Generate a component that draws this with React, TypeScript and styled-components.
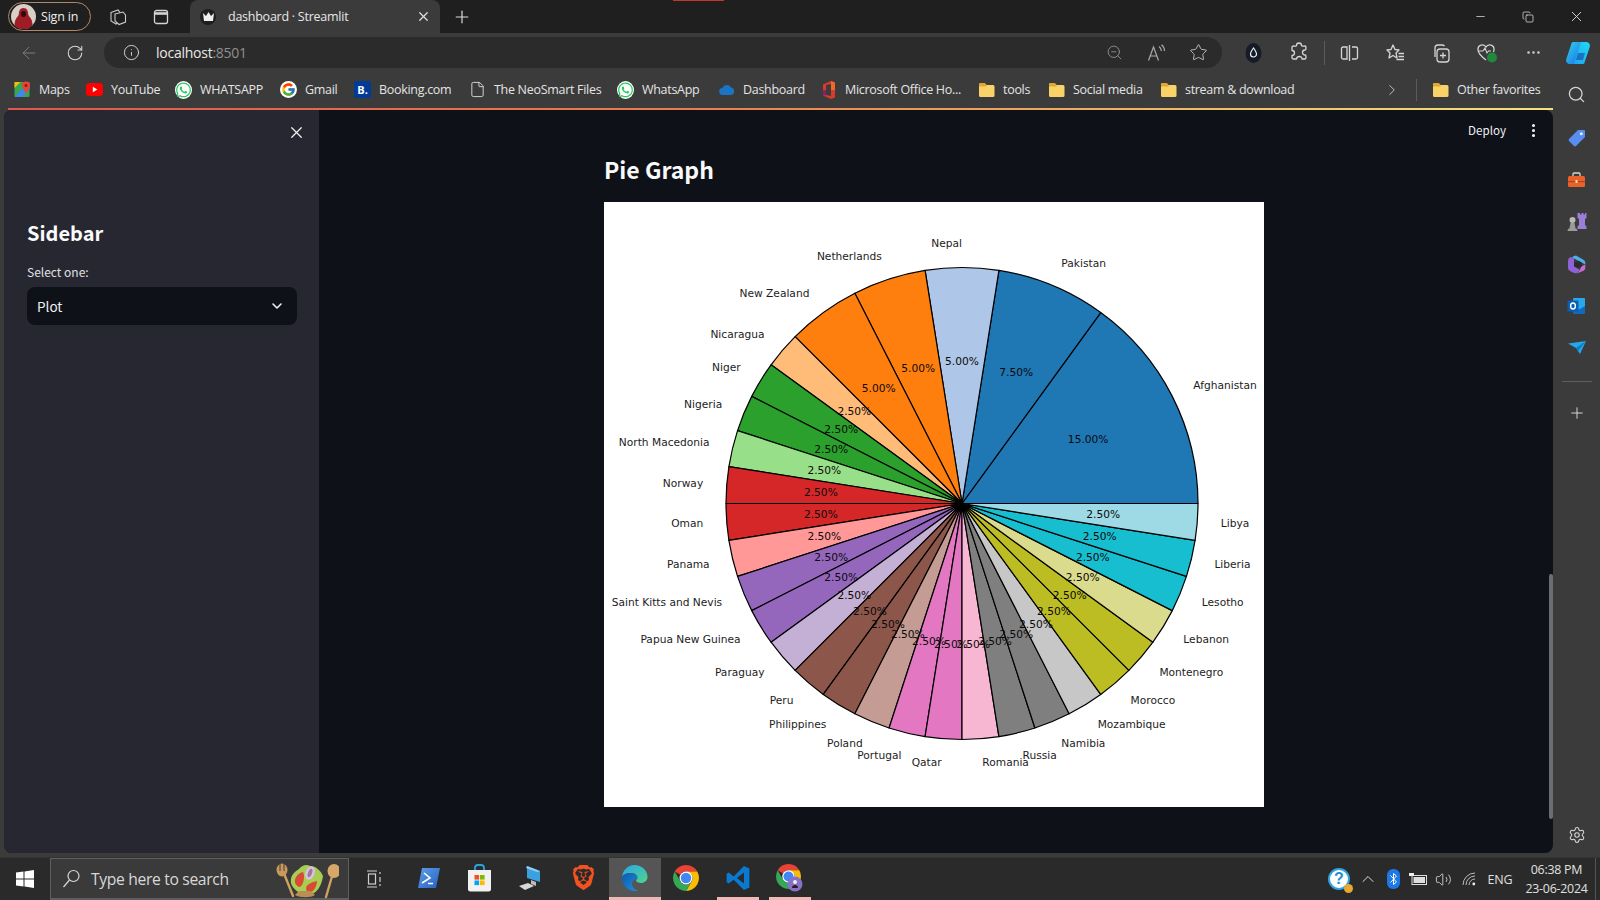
import React from "react";
import styled, { createGlobalStyle } from "styled-components";
import {
  ArrowLeft, RotateCw, Info, X, Plus, Minus, Copy, ChevronRight, ChevronDown, ChevronUp,
  Settings, EllipsisVertical, Ellipsis, Volume2, Search, ZoomOut, Star, File,
} from "lucide-react";
import { IoLogoWhatsapp } from "react-icons/io5";
import { FcGoogle } from "react-icons/fc";
import { SiBrave } from "react-icons/si";

const UI = `"Open Sans", "Noto Sans", "Liberation Sans", sans-serif`;
const ST = `"Noto Sans CJK SC", "Noto Sans", "Open Sans", sans-serif`;

const Global = createGlobalStyle`
  html, body { margin: 0; padding: 0; background: #3b3b3b; overflow: hidden; }
  * { box-sizing: border-box; }
`;

const Page = styled.div`
  width: 1600px; height: 900px; display: flex; flex-direction: column; font-family: ${UI}; color: #e6e6e6; position: relative;
`;
const TitleBar = styled.div`
  height: 33px; background: #1f1f1f; display: flex; align-items: stretch; padding-left: 8px; position: relative;
`;
const RecordMark = styled.div`
  position: absolute; left: 673px; top: 0; width: 51px; height: 1px; background: #c0392b;
`;
const SignIn = styled.div`
  width: 83px; height: 29px; margin-top: 2px; border: 1px solid #b08a68; border-radius: 15px; display: flex; align-items: center;
  padding-left: 2px; gap: 5px; font-size: 12.5px; color: #eee; letter-spacing: -0.2px;
`;
const Slot = styled.div<{ $w: number }>`
  width: ${(p) => p.$w}px; flex: none; display: flex; align-items: center; justify-content: center; color: #dedede;
`;
const SlotGap = styled.div<{ $w: number }>`
  width: ${(p) => p.$w}px; flex: none;
`;
const Tab = styled.div`
  width: 250px; margin-left: 8px; background: #3b3b3b; border-radius: 8px 8px 0 0; display: flex; align-items: center; padding-left: 10px; gap: 12px;
  font-size: 12.5px; letter-spacing: -0.25px; color: #e8e8e8;
`;
const TabTitle = styled.span` flex: 1; `;
const Favicon = styled.div`
  width: 16px; height: 16px; border-radius: 50%; background: #1d1d22; display: flex; align-items: center; justify-content: center;
`;
const Spacer = styled.div` flex: 1; `;

const ToolBar = styled.div`
  height: 38px; background: #3b3b3b; display: flex; align-items: stretch; padding: 4px 0 3px 6px;
`;
const AddressBar = styled.div`
  width: 1120px; margin: 0 8px 0 6px; background: #2b2b2b; border-radius: 16px; display: flex; align-items: center; padding: 0 3px 0 17px; font-size: 14px; letter-spacing: -0.25px;
`;
const Host = styled.span` color: #e8e8e8; margin-left: 15px; `;
const Port = styled.span` color: #8f8f8f; `;
const Divider = styled.div<{ $h: number; $ml: number; $mr: number }>`
  width: 1px; height: ${(p) => p.$h}px; background: #5c5c5c; align-self: center; flex: none; margin: 0 ${(p) => p.$mr}px 0 ${(p) => p.$ml}px;
`;

const BookmarksBar = styled.div`
  height: 37px; background: #3b3b3b; display: flex; align-items: center; padding-left: 14px;
`;
const Bookmark = styled.div<{ $w: number }>`
  width: ${(p) => p.$w}px; flex: none; display: flex; align-items: center; gap: 8px; font-size: 12.5px; letter-spacing: -0.3px; color: #e4e4e4; white-space: nowrap;
`;
const BmIcon = styled.div`
  width: 17px; height: 17px; flex: none; display: flex; align-items: center; justify-content: center;
`;
const BookingBadge = styled.div`
  width: 17px; height: 17px; background: #003b95; border-radius: 2px; color: #fff; font-size: 11px; font-weight: 700; text-align: center; line-height: 17px; letter-spacing: 0;
`;

const Workspace = styled.div`
  flex: 1; min-height: 0; display: flex; background: #3b3b3b; padding-left: 4px;
`;
const WindowColumn = styled.div`
  width: 1549px; display: flex; flex-direction: column; padding-bottom: 4px;
`;
const AccentLine = styled.div`
  height: 2px; margin-left: 4px; flex: none; background: linear-gradient(90deg, #e0574c 0%, #e8804f 45%, #efb866 75%, #f3e27c 100%);
`;
const StWindow = styled.div`
  flex: 1; min-height: 0; display: flex; border-radius: 8px; overflow: hidden; position: relative; background: #0e1117;
`;
const Sidebar = styled.aside`
  width: 315px; flex: none; background: #262730; padding: 0 22px 0 23px; display: flex; flex-direction: column; font-family: ${ST};
`;
const CloseRow = styled.div`
  height: 34px; display: flex; justify-content: flex-end; align-items: flex-end; color: #f0f0f0; margin-right: -9px; padding-bottom: 2px;
`;
const SideTitle = styled.h2`
  margin: 73px 0 0; height: 32px; font-size: 20px; line-height: 32px; font-weight: 700; color: #fafafa;
`;
const SelectLabel = styled.div`
  margin-top: 13px; height: 20px; font-size: 12px; line-height: 20px; color: #e0e0e4;
`;
const SelectBox = styled.div`
  margin-top: 5px; height: 38px; border-radius: 8px; background: #0e1117; display: flex; align-items: center; justify-content: space-between;
  padding: 0 12px 0 10px; font-size: 13.5px; color: #f0f0f2;
`;
const Main = styled.main`
  flex: 1; min-width: 0; padding: 0 0 0 285px; font-family: ${ST}; position: relative;
`;
const TopActions = styled.div`
  position: absolute; right: 11px; top: 9px; height: 22px; display: flex; align-items: center; gap: 19px; font-size: 11.6px; color: #f0f0f2;
`;
const MainTitle = styled.h1`
  margin: 40px 0 0; height: 41px; font-size: 23px; line-height: 38px; font-weight: 700; color: #fafafa;
`;
const Figure = styled.div`
  margin-top: 11px; width: 660px; height: 605px; background: #fff;
`;
const Scrollbar = styled.div`
  position: absolute; right: 0; top: 464px; width: 4px; height: 245px; background: #6a6d75; border-radius: 2px;
`;
const ChartName = styled.text`
  font-family: "DejaVu Sans", sans-serif; font-size: 10.65px; fill: #1c1c1c;
`;
const ChartPct = styled.text`
  font-family: "DejaVu Sans", sans-serif; font-size: 10.65px; fill: #0a0a0a;
`;

const Rail = styled.div`
  flex: 1; display: flex; flex-direction: column; align-items: center; padding: 9px 0 1px; color: #d8d8d8; position: relative;
`;
const RailSearch = styled.div`
  position: absolute; top: -23px; left: 14px; color: #d5d5d5;
`;
const RailSlot = styled.div`
  height: 42px; width: 100%; display: flex; align-items: center; justify-content: center;
`;
const RailRule = styled.div`
  width: 30px; height: 1px; background: #5f5f5f; margin: 12px 0 10px;
`;

const Taskbar = styled.div`
  height: 43px; flex: none; background: #2a2a2a; border-top: 1px solid #333; display: flex; align-items: stretch; color: #ddd;
`;
const SearchBox = styled.div`
  width: 299px; flex: none; background: #3a3a3a; border: 1px solid #5e5e5e; border-bottom-width: 2px; display: flex; align-items: center; padding: 0 9px 0 11px; gap: 10px; font-size: 15.7px; color: #d8d8d8; letter-spacing: -0.35px;
`;
const TaskSlot = styled.div<{ $active?: boolean }>`
  width: 51.7px; flex: none; display: flex; flex-direction: column; align-items: center; background: ${(p) => (p.$active ? "#555" : "transparent")};
`;
const TaskIcon = styled.div`
  flex: 1; display: flex; align-items: center; justify-content: center;
`;
const RunningBar = styled.div<{ $wide?: boolean; $on?: boolean }>`
  height: 3px; flex: none; width: ${(p) => (p.$wide ? "100%" : "42px")}; background: ${(p) => (p.$on ? "#f0b9b6" : "transparent")};
`;
const TrayText = styled.div`
  font-size: 12.5px; color: #e0e0e0; letter-spacing: -0.2px;
`;
const Clock = styled.div`
  width: 78px; flex: none; display: flex; flex-direction: column; align-items: center; justify-content: center; gap: 4px; font-size: 12.4px; line-height: 15px; color: #e0e0e0; letter-spacing: -0.25px; border-right: 1px solid #555; margin-right: 4px; white-space: nowrap;
`;
const TaskSpacer = styled.div<{ $w: number }>`
  width: ${(p) => p.$w}px; flex: none;
`;
const HelpBadge = styled.div`
  width: 22px; height: 22px; border-radius: 50%; background: #fff; border: 2.5px solid #2fa3e0; color: #1f8fd0; font-family: "Liberation Sans", sans-serif; font-weight: 700; font-size: 16px; line-height: 17px; text-align: center; position: relative;
  &::after { content: ""; position: absolute; right: -5px; bottom: -5px; width: 9px; height: 9px; border-radius: 50%; background: #e9a92f; }
`;

/* ---------- drawings ---------- */
const Avatar = () => (
  <svg width="25" height="25" viewBox="0 0 25 25">
    <circle cx="12.5" cy="12.5" r="12.5" fill="#d9cfc9" />
    <path d="M12.5 4c3.4 0 4.6 3 4.6 5.6 0 1.6 1 2.6 2.4 4.4 1.6 2 2 5.6 2 7.4a12.5 12.5 0 0 1-18 0c0-1.8.4-5.4 2-7.4 1.4-1.8 2.4-2.8 2.4-4.4C7.9 7 9.1 4 12.5 4z" fill="#9e1c26" />
    <ellipse cx="12.5" cy="10" rx="2.6" ry="3" fill="#2a0d10" />
  </svg>
);
const Workspaces = () => (
  <svg width="18" height="18" viewBox="0 0 18 18" fill="none" stroke="#c9c9c9" strokeWidth="1.1">
    <path d="M2 4.5 9 2l2 2.5v9L7 16l-5-3z" />
    <path d="M6 6l8-2 2.5 3v7L10 16.5 6 13z" fill="#1f1f1f" />
  </svg>
);
const TabsIcon = () => (
  <svg width="16" height="16" viewBox="0 0 16 16" fill="none" stroke="#d4d4d4" strokeWidth="1.3">
    <rect x="1.5" y="1.5" width="13" height="13" rx="2" />
    <path d="M1.5 4.5h13" strokeWidth="2.6" />
  </svg>
);
const Crown = () => (
  <svg width="11" height="9" viewBox="0 0 11 9"><path d="M0 1l3 3L5.5 0 8 4l3-3-1 8H1z" fill="#eee" /></svg>
);
const MapsIcon = () => (
  <svg width="17" height="17" viewBox="0 0 17 17">
    <rect x="0.5" y="1" width="15" height="15" rx="1.5" fill="#34a853" />
    <path d="M.5 16 15.5 1v7L8 16z" fill="#4285f4" />
    <path d="M.5 1h6L.5 7z" fill="#fbbc04" />
    <circle cx="12" cy="4.5" r="4" fill="#ea4335" /><circle cx="12" cy="4.5" r="1.5" fill="#8c1c13" />
    <path d="M9 7l3 6 3-6z" fill="#ea4335" />
  </svg>
);
const YouTube = () => (
  <svg width="17" height="13" viewBox="0 0 17 13"><rect width="17" height="13" rx="3.5" fill="#f00" /><path d="M6.8 3.8v5.400l4.600-2.700z" fill="#fff" /></svg>
);
const Whats = () => <IoLogoWhatsapp size={18} color="#27c95f" style={{ background: "#fff", borderRadius: "50%" }} />;
const Google = () => <FcGoogle size={17} style={{ background: "#fff", borderRadius: "50%", padding: 1 }} />;
const CloudIcon = () => (
  <svg width="16" height="11" viewBox="0 0 16 11"><path d="M4 11a3.5 3.5 0 0 1-.6-7A4.8 4.8 0 0 1 12 3.5 3.8 3.8 0 0 1 12 11z" fill="#1b74c4" /></svg>
);
const OfficeIcon = () => (
  <svg width="14" height="18" viewBox="0 0 14 18">
    <path d="M1 3.5 9 0l4 1.500v15L9 18l-8-3.500z" fill="#d83b2b" />
    <path d="M9 3v12L4 14V4z" fill="#3b3b3b" />
    <path d="M9 0l4 1.500V9H9z" fill="#f2672a" /><path d="M1 9h3v5.500l-3 0z" fill="#8a1f6a" />
  </svg>
);
const FolderIcon = () => (
  <svg width="17" height="15" viewBox="0 0 17 15">
    <path d="M1 2.5A1.5 1.5 0 0 1 2.5 1h4L8.5 3H15a1.5 1.5 0 0 1 1.5 1.5v9A1.5 1.5 0 0 1 15 15H2.5A1.5 1.5 0 0 1 1 13.5z" fill="#f9d36a" />
    <path d="M1 2.5A1.5 1.5 0 0 1 2.5 1h4L8.500 3v1.500H1z" fill="#e0a92e" />
  </svg>
);
const InkDrop = () => (
  <svg width="19" height="22" viewBox="0 0 19 22">
    <ellipse cx="9.5" cy="11" rx="8" ry="10" fill="#151c26" />
    <path d="M9.5 6c2 2.800 3 4.200 3 6a3 3 0 0 1-6 0c0-1.800 1-3.200 3-6z" fill="none" stroke="#eef" strokeWidth="1.2" />
  </svg>
);
const ReadAloud = () => (
  <svg width="19" height="18" viewBox="0 0 19 18" fill="none" stroke="#a9a9a9" strokeWidth="1.2">
    <path d="M1.5 16.5 6.5 3l5 13.500M3.3 12h6.500" />
    <path d="M12 2.5c1.500 1 2.300 2.600 2.300 4.500M14.500.8c2 1.500 3 3.600 3 6.200" />
  </svg>
);
const ExtensionPiece = () => (
  <svg width="20" height="21" viewBox="0 0 20 21" fill="none" stroke="#d6d6d6" strokeWidth="1.3" strokeLinejoin="round">
    <path d="M7.5 3.500a2.500 2.500 0 0 1 5 0c0 .8 2 .5 3.500.5 1 0 1 1 1 2.500 0 1.500-1 1.500-1 1.500a2.500 2.500 0 0 0 0 5s1 0 1 1.500c0 1.500 0 2.500-1 2.500h-3s.2-2.500-2.500-2.500S7.500 17 7.500 17h-3c-1 0-1.500-.5-1.500-1.500v-2c1.500 0 2.500-1 2.500-2.500S4.500 8.500 3 8.500v-3C3 4.500 3.500 4 4.500 4c1.500 0 3 .3 3-.5z" />
  </svg>
);
const SplitScreen = () => (
  <svg width="19" height="18" viewBox="0 0 19 18" fill="none" stroke="#d6d6d6" strokeWidth="1.3">
    <path d="M7 3H3a1.500 1.500 0 0 0-1.500 1.500v9A1.500 1.500 0 0 0 3 15h4zM12 3h4a1.500 1.500 0 0 1 1.500 1.500v9A1.500 1.500 0 0 1 16 15h-4" />
    <path d="M9.500 1v16" />
  </svg>
);
const Collections = () => (
  <svg width="20" height="22" viewBox="0 0 20 22" fill="none" stroke="#d6d6d6" strokeWidth="1.3">
    <rect x="6" y="7" width="12" height="13" rx="3" />
    <path d="M12 10.500v6M9 13.500h6" />
    <path d="M4 15V6a3 3 0 0 1 3-3h4a3 3 0 0 1 2.500 1.200" />
  </svg>
);
const FavList = () => (
  <svg width="20" height="20" viewBox="0 0 20 20" fill="none" stroke="#d6d6d6" strokeWidth="1.3">
    <path d="M8 2l2 4.500 4 .5-3 3 1 5-4-2.500L4 15l1-5-3-3 4-.5z" strokeLinejoin="round" />
    <path d="M13.500 10.500H19M13.500 13.500H19M11.500 16.500H19" />
  </svg>
);
const HealthHeart = () => (
  <svg width="22" height="22" viewBox="0 0 22 22" fill="none">
    <path d="M10 18C4 13.500 2 11 2 7.500A4.300 4.300 0 0 1 10 5a4.300 4.300 0 0 1 8 2.500c0 1-.2 1.800-.6 2.500" stroke="#d6d6d6" strokeWidth="1.3" />
    <path d="M3 9h4l2-3 2 5 1.500-2H15" stroke="#d6d6d6" strokeWidth="1.1" />
    <circle cx="16" cy="15.5" r="5" fill="#1f8a3c" />
  </svg>
);
const CopilotLogo = () => (
  <svg width="28" height="28" viewBox="0 0 28 28">
    <defs>
      <linearGradient id="cpA" x1="0" y1="0" x2="1" y2="1"><stop offset="0" stopColor="#2fd3f0" /><stop offset="1" stopColor="#1a6fe0" /></linearGradient>
      <linearGradient id="cpB" x1="0" y1="1" x2="1" y2="0"><stop offset="0" stopColor="#1ea4f0" /><stop offset="1" stopColor="#23d8f5" /></linearGradient>
    </defs>
    <path d="M9 3h9L11 25H6C3 25 1.500 22.500 2.300 20L7 6c.4-1.700 1-3 2-3z" fill="url(#cpA)" />
    <path d="M19 25h-9l7-22h5c3 0 4.500 2.500 3.700 5L21 22c-.4 1.700-1 3-2 3z" fill="url(#cpB)" />
    <path d="M14 14h7l-2 7h-7z" fill="#123c9c" opacity=".55" />
  </svg>
);
const TagIcon = () => (
  <svg width="18" height="18" viewBox="0 0 18 18"><path d="M10 1h6a1 1 0 0 1 1 1v6L8 17a1.500 1.500 0 0 1-2 0L1 12a1.500 1.500 0 0 1 0-2z" fill="#5a8df0" /><circle cx="13.3" cy="4.7" r="1.5" fill="#e6efff" /></svg>
);
const Toolbox = () => (
  <svg width="19" height="16" viewBox="0 0 19 16">
    <path d="M6 4V2a1 1 0 0 1 1-1h5a1 1 0 0 1 1 1v2" fill="none" stroke="#e0d6cc" strokeWidth="1.3" />
    <rect x="1" y="4" width="17" height="11" rx="1.5" fill="#e8622a" /><rect x="1" y="9" width="17" height="1.2" fill="#b8431a" /><rect x="8.5" y="8" width="2" height="3" fill="#ffd9c4" />
  </svg>
);
const ChessIcon = () => (
  <svg width="20" height="20" viewBox="0 0 20 20">
    <path d="M11 1h2v1.500h1.500V1h2v1.500H18V1h1.500v5l-1.500 1v6l1.500 1.500V17H10.500v-2.500L12 13V7L10.500 6V1z" fill="#9b7fd6" />
    <circle cx="5.5" cy="8" r="3" fill="#b9b9b9" />
    <path d="M3.500 11h4l1 5H2.500zM.5 19c0-2 1.500-3 3-3h4c1.500 0 3 1 3 3z" fill="#9a9a9a" />
  </svg>
);
const M365 = () => (
  <svg width="19" height="19" viewBox="0 0 19 19">
    <path d="M9 .6 16 4.400c1.500.8 2.300 1.800 2.300 3.300v1.800L12 6 5 2.500A6 6 0 0 1 9 .6z" fill="#4fb0e8" />
    <path d="M1 6c0-1.800.8-3 2.500-4L7 3.500v8L13 15l-3.500 3.300A6 6 0 0 1 6 17.500L3 16c-1.500-.8-2-2-2-3.500z" fill="#8f63d8" />
    <path d="M18.300 9.500v3.200c0 1.300-.7 2.300-1.800 3L10 18.500l3-3.500 1-3.500z" fill="#c86ad0" />
    <path d="M7 7.500 12 6l3 2v3.500L11.500 13 7 11z" fill="#2a2a35" />
  </svg>
);
const Outlook = () => (
  <svg width="19" height="18" viewBox="0 0 19 18">
    <rect x="6" y="1" width="12" height="13" rx="1" fill="#28a8ea" />
    <path d="M6 9l6 3.500L18 9v7a1 1 0 0 1-1 1H7a1 1 0 0 1-1-1z" fill="#0f6cbd" />
    <rect x="0.5" y="3.5" width="11" height="11" rx="1.2" fill="#0a5fb0" />
    <ellipse cx="6" cy="9" rx="2.4" ry="3" fill="none" stroke="#fff" strokeWidth="1.4" />
  </svg>
);
const SendIcon = () => (
  <svg width="18" height="14" viewBox="0 0 18 14"><path d="M0 2.500 18 0l-6 13-4-6z" fill="#26a7e8" /><path d="M8 7l10-7-8 10z" fill="#0d7bc4" /></svg>
);
const WinLogo = () => (
  <svg width="18" height="18" viewBox="0 0 18 18" fill="#fff"><path d="M0 2.600 7.500 1.500v7H0zM8.500 1.400 18 0v8.500H8.500zM0 9.500h7.500v7L0 15.400zM8.500 9.500H18V18l-9.500-1.400z" /></svg>
);
const SearchGlass = () => (
  <svg width="19" height="19" viewBox="0 0 19 19" fill="none" stroke="#d8d8d8" strokeWidth="1.2"><circle cx="11.5" cy="7" r="5.5" /><path d="M7.500 11 1.500 18" /></svg>
);
const Salad = () => (
  <svg width="66" height="40" viewBox="0 0 66 40">
    <path d="M10 12l10 25" stroke="#cfa05f" strokeWidth="2.4" strokeLinecap="round" />
    <ellipse cx="9" cy="11" rx="5.500" ry="6.500" fill="#c9995a" />
    <path d="M7 5v7M11 5v7" stroke="#3a3a3a" strokeWidth="1" />
    <path d="M60 14l-7 24" stroke="#cfa05f" strokeWidth="2.400" strokeLinecap="round" />
    <ellipse cx="61" cy="12" rx="6.500" ry="7" fill="#d6a768" />
    <path d="M18 24c-1-7 3-11 8-14 3-4 8-5 11-3 6 0 11 5 13 10-1 7-4 14-9 17-5 2-10 2-14 0-4-2-8-6-9-10z" fill="#a9cc55" />
    <path d="M22 24c-1-5 3-10 8-11 2 4 1 12-3 15-2 0-4-2-5-4z" fill="#d94a33" />
    <path d="M33 29c1-4 6-6 11-7 0 5-3 10-7 12-2 0-4-2-4-5z" fill="#d94a33" />
    <ellipse cx="37" cy="14" rx="4.500" ry="7" fill="#d9c3de" transform="rotate(20 37 14)" />
    <ellipse cx="37" cy="14" rx="2" ry="4.500" fill="#a774a8" transform="rotate(20 37 14)" />
    <path d="M22 36c5 3 16 3 20 0l-4-4H26z" fill="#b98f55" />
  </svg>
);
const TaskViewIcon = () => (
  <svg width="20" height="20" viewBox="0 0 20 20" fill="none" stroke="#cfcfcf" strokeWidth="1.2">
    <path d="M2 2h10M2 18h10M15 3v2M15 8v5M15 15v2" /><rect x="3.5" y="5" width="7" height="10" />
  </svg>
);
const PowerShell = () => (
  <svg width="25" height="24" viewBox="0 0 25 24">
    <defs><linearGradient id="psA" x1="0" y1="0" x2="1" y2="1"><stop offset="0" stopColor="#5aa0e8" /><stop offset="1" stopColor="#2a5fc0" /></linearGradient></defs>
    <path d="M6 2h18l-4 20H2z" fill="url(#psA)" />
    <path d="M8 7l6 5-8 5M12 17.500h5" stroke="#fff" strokeWidth="1.6" fill="none" />
  </svg>
);
const Store = () => (
  <svg width="25" height="28" viewBox="0 0 25 28">
    <path d="M8 6V4a3 3 0 0 1 3-3h3a3 3 0 0 1 3 3v2" fill="none" stroke="#29a3e0" strokeWidth="1.8" />
    <path d="M1 6h23v19a2.500 2.500 0 0 1-2.500 2.500h-18A2.500 2.500 0 0 1 1 25z" fill="#f1f1f1" />
    <rect x="7.5" y="11" width="4.6" height="4.6" fill="#f25022" /><rect x="13" y="11" width="4.6" height="4.6" fill="#7fba00" />
    <rect x="7.5" y="16.5" width="4.6" height="4.6" fill="#00a4ef" /><rect x="13" y="16.5" width="4.6" height="4.6" fill="#ffb900" />
  </svg>
);
const RemotePc = () => (
  <svg width="26" height="26" viewBox="0 0 26 26">
    <path d="M9 1l13 5v11L9 13z" fill="#3ba0e0" /><path d="M9 1l13 5-3 1L8 3z" fill="#8ecdf2" />
    <path d="M13 15l5 2v4l-5-2z" fill="#bbb" />
    <path d="M1 21l9-3 6 3-9 4z" fill="#d8d8d8" />
  </svg>
);
const EdgeLogo = () => (
  <svg width="27" height="27" viewBox="0 0 27 27">
    <defs>
      <linearGradient id="edA" x1="0" y1="0" x2="1" y2="1"><stop offset="0" stopColor="#2aa6e8" /><stop offset="1" stopColor="#4fd68c" /></linearGradient>
      <linearGradient id="edB" x1="0" y1="0" x2="1" y2="1"><stop offset="0" stopColor="#0f5aa8" /><stop offset="1" stopColor="#1f8fe0" /></linearGradient>
    </defs>
    <path d="M1 14C1 7 6.500 1 13.500 1c7 0 13 5 13 12 0 3.500-3 6-6.500 6-2.500 0-5-1-5-2.500 0-.5.300-.8.800-1.300.5-.5.700-1 .700-1.700 0-2.500-3-4.500-6.500-4.500C5 9 1 11 1 14z" fill="url(#edA)" />
    <path d="M1 14c0-3 4-5 8.500-5 3.500 0 6.500 2 6.500 4.500 0 .7-.2 1.200-.7 1.700-2 0-4.300 1.800-4.300 4.800 0 3 2.500 6 6.500 6.500-1 .3-2.200.5-3.500.5C6.500 27 1 21 1 14z" fill="url(#edB)" />
  </svg>
);
const ChromeLogo = ({ size = 26 }: { size?: number }) => (
  <svg width={size} height={size} viewBox="4 4 40 40">
    <path d="M24 4a20 20 0 0 1 17.300 10H24a10 10 0 0 0-8.700 5L6.700 14A20 20 0 0 1 24 4z" fill="#ea4335" />
    <path d="M41.300 14A20 20 0 0 1 24 44l8.700-15a10 10 0 0 0 0-10L24 14z" fill="#fbbc04" />
    <path d="M24 44A20 20 0 0 1 6.700 14l8.600 15a10 10 0 0 0 17.400 0z" fill="#34a853" />
    <circle cx="24" cy="24" r="10" fill="#fff" /><circle cx="24" cy="24" r="8" fill="#4285f4" />
  </svg>
);
const VsCode = () => (
  <svg width="26" height="28" viewBox="0 0 24 24">
    <path fillRule="evenodd" d="M17.500 1 8 10.500 3.500 7 1.500 8v8l2 1L8 13.500 17.500 23l5-2.200V3.200zM17.500 7v10l-6.500-5z" fill="#0a7ad1" />
  </svg>
);
const ChromeProfile = () => (
  <svg width="27" height="28" viewBox="0 0 27 28">
    <svg width="25" height="25" viewBox="4 4 40 40">
      <path d="M24 4a20 20 0 0 1 17.300 10H24a10 10 0 0 0-8.700 5L6.700 14A20 20 0 0 1 24 4z" fill="#ea4335" />
      <path d="M41.300 14A20 20 0 0 1 24 44l8.700-15a10 10 0 0 0 0-10L24 14z" fill="#fbbc04" />
      <path d="M24 44A20 20 0 0 1 6.700 14l8.600 15a10 10 0 0 0 17.400 0z" fill="#34a853" />
      <circle cx="24" cy="24" r="10" fill="#fff" /><circle cx="24" cy="24" r="8" fill="#4285f4" />
    </svg>
    <circle cx="19" cy="20" r="7.500" fill="#8a6fc9" /><circle cx="19" cy="18" r="2" fill="#eee" /><path d="M16 24c0-2 1-3 3-3s3 1 3 3z" fill="#222" />
  </svg>
);
const BluetoothPill = () => (
  <svg width="13" height="20" viewBox="0 0 13 20">
    <rect width="13" height="20" rx="6" fill="#1b78e6" />
    <path d="M3.500 6.500l6 6.500-3 2.500V4.500l3 2.500-6 6.500" fill="none" stroke="#fff" strokeWidth="1" />
  </svg>
);
const BatteryIcon = () => (
  <svg width="18" height="12" viewBox="0 0 18 12">
    <rect x="3" y="2.5" width="14.5" height="9" fill="none" stroke="#ddd" />
    <rect x="4.5" y="4" width="11.5" height="6" fill="#ddd" /><rect x="0" y="0" width="5" height="3" fill="#eee" />
  </svg>
);
const WifiIcon = () => (
  <svg width="14" height="14" viewBox="0 0 14 14" fill="none" stroke="#bbb" strokeWidth="1">
    <path d="M1 13A12 12 0 0 1 13 1M4 13a9 9 0 0 1 9-9M7 13a6 6 0 0 1 6-6" />
    <circle cx="11.8" cy="12" r="1.4" fill="#eee" stroke="none" />
  </svg>
);

/* ---------- data ---------- */
const SLICES: [string, number, string][] = [
  ["Afghanistan", 15, "#1f77b4"], ["Pakistan", 7.5, "#1f77b4"], ["Nepal", 5, "#aec7e8"], ["Netherlands", 5, "#ff7f0e"], ["New Zealand", 5, "#ff7f0e"],
  ["Nicaragua", 2.5, "#ffbb78"], ["Niger", 2.5, "#2ca02c"], ["Nigeria", 2.5, "#2ca02c"], ["North Macedonia", 2.5, "#98df8a"], ["Norway", 2.5, "#d62728"],
  ["Oman", 2.5, "#d62728"], ["Panama", 2.5, "#ff9896"], ["Saint Kitts and Nevis", 2.5, "#9467bd"], ["Papua New Guinea", 2.5, "#9467bd"], ["Paraguay", 2.5, "#c5b0d5"],
  ["Peru", 2.5, "#8c564b"], ["Philippines", 2.5, "#8c564b"], ["Poland", 2.5, "#c49c94"], ["Portugal", 2.5, "#e377c2"], ["Qatar", 2.5, "#e377c2"],
  ["Romania", 2.5, "#f7b6d2"], ["Russia", 2.5, "#7f7f7f"], ["Namibia", 2.5, "#7f7f7f"], ["Mozambique", 2.5, "#c7c7c7"], ["Morocco", 2.5, "#bcbd22"],
  ["Montenegro", 2.5, "#bcbd22"], ["Lebanon", 2.5, "#dbdb8d"], ["Lesotho", 2.5, "#17becf"], ["Liberia", 2.5, "#17becf"], ["Libya", 2.5, "#9edae5"],
];

const PieChart = () => {
  const cx = 358, cy = 301.5, r = 236;
  let acc = 0;
  const parts = SLICES.map(([name, pct, color]) => {
    const a0 = (acc / 100) * 2 * Math.PI;
    acc += pct;
    const a1 = (acc / 100) * 2 * Math.PI;
    const mid = (a0 + a1) / 2;
    return { name, pct, color, a0, a1, mid };
  });
  const pt = (a: number, k: number) => [cx + k * r * Math.cos(a), cy - k * r * Math.sin(a)];
  return (
    <svg width="660" height="605" viewBox="0 0 660 605">
      {parts.map((s) => {
        const [x0, y0] = pt(s.a0, 1);
        const [x1, y1] = pt(s.a1, 1);
        const large = s.a1 - s.a0 > Math.PI ? 1 : 0;
        return (
          <path key={s.name} d={`M${cx} ${cy}L${x0} ${y0}A${r} ${r} 0 ${large} 0 ${x1} ${y1}Z`} fill={s.color} stroke="#000" strokeWidth="1.2" strokeLinejoin="round" />
        );
      })}
      {parts.map((s) => {
        const [x, y] = pt(s.mid, 1.1);
        return (
          <ChartName key={s.name} x={x} y={y} dominantBaseline="central" textAnchor={Math.cos(s.mid) > 0.001 ? "start" : "end"}>
            {s.name}
          </ChartName>
        );
      })}
      {parts.map((s) => {
        const [x, y] = pt(s.mid, 0.6);
        return (
          <ChartPct key={s.name} x={x} y={y} dominantBaseline="central" textAnchor="middle">
            {s.pct.toFixed(2)}%
          </ChartPct>
        );
      })}
    </svg>
  );
};

const BOOKMARKS: [React.ReactNode, string, number][] = [
  [<MapsIcon />, "Maps", 72],
  [<YouTube />, "YouTube", 89],
  [<Whats />, "WHATSAPP", 105],
  [<Google />, "Gmail", 74],
  [<BookingBadge>B.</BookingBadge>, "Booking.com", 115],
  [<File size={17} strokeWidth={1.3} color="#ddd" />, "The NeoSmart Files", 148],
  [<Whats />, "WhatsApp", 101],
  [<CloudIcon />, "Dashboard", 102],
  [<OfficeIcon />, "Microsoft Office Ho...", 158],
  [<FolderIcon />, "tools", 70],
  [<FolderIcon />, "Social media", 112],
  [<FolderIcon />, "stream & download", 220],
];

const TASK_APPS: { icon: React.ReactNode; active?: boolean; run?: boolean }[] = [
  { icon: <PowerShell /> },
  { icon: <Store /> },
  { icon: <RemotePc /> },
  { icon: <SiBrave size={25} color="#f1521f" /> },
  { icon: <EdgeLogo />, active: true, run: true },
  { icon: <ChromeLogo /> },
  { icon: <VsCode />, run: true },
  { icon: <ChromeProfile />, run: true },
];

export default function App() {
  return (
    <>
      <Global />
      <Page>
        <TitleBar>
          <RecordMark />
          <SignIn><Avatar />Sign in</SignIn>
          <SlotGap $w={5} />
          <Slot $w={43}><Workspaces /></Slot>
          <Slot $w={43}><TabsIcon /></Slot>
          <Tab>
            <Favicon><Crown /></Favicon>
            <TabTitle>dashboard · Streamlit</TabTitle>
            <Slot $w={34}><X size={15} color="#e0e0e0" /></Slot>
          </Tab>
          <Slot $w={44}><Plus size={20} strokeWidth={1.4} /></Slot>
          <Spacer />
          <Slot $w={48}><Minus size={13} strokeWidth={1.4} /></Slot>
          <Slot $w={48}><Copy size={12} strokeWidth={1.5} /></Slot>
          <Slot $w={48}><X size={17} strokeWidth={1.3} /></Slot>
        </TitleBar>

        <ToolBar>
          <Slot $w={46}><ArrowLeft size={20} strokeWidth={1.2} color="#7d7d7d" /></Slot>
          <Slot $w={46}><RotateCw size={18} strokeWidth={1.4} color="#d8d8d8" /></Slot>
          <AddressBar>
            <Slot $w={20}><Info size={17} strokeWidth={1.3} color="#dcdcdc" /></Slot>
            <Host>localhost<Port>:8501</Port></Host>
            <Spacer />
            <Slot $w={42}><ZoomOut size={17} strokeWidth={1.2} color="#9a9a9a" /></Slot>
            <Slot $w={42}><ReadAloud /></Slot>
            <Slot $w={42}><Star size={19} strokeWidth={1.2} color="#bdbdbd" /></Slot>
          </AddressBar>
          <Slot $w={46}><InkDrop /></Slot>
          <Slot $w={46}><ExtensionPiece /></Slot>
          <Divider $h={24} $ml={2} $mr={1} />
          <Slot $w={46}><SplitScreen /></Slot>
          <Slot $w={46}><FavList /></Slot>
          <Slot $w={46}><Collections /></Slot>
          <Slot $w={46}><HealthHeart /></Slot>
          <Slot $w={46}><Ellipsis size={17} strokeWidth={1.6} color="#d6d6d6" /></Slot>
          <Slot $w={44}><CopilotLogo /></Slot>
        </ToolBar>

        <BookmarksBar>
          {BOOKMARKS.map(([icon, label, w]) => (
            <Bookmark key={label} $w={w}><BmIcon>{icon}</BmIcon>{label}</Bookmark>
          ))}
          <Slot $w={24}><ChevronRight size={18} strokeWidth={1.2} color="#cfcfcf" /></Slot>
          <Divider $h={22} $ml={12} $mr={15} />
          <Bookmark $w={120}><BmIcon><FolderIcon /></BmIcon>Other favorites</Bookmark>
        </BookmarksBar>

        <Workspace>
          <WindowColumn>
            <AccentLine />
            <StWindow>
              <Sidebar>
                <CloseRow><X size={19} strokeWidth={1.6} /></CloseRow>
                <SideTitle>Sidebar</SideTitle>
                <SelectLabel>Select one:</SelectLabel>
                <SelectBox>Plot<ChevronDown size={16} strokeWidth={2.4} /></SelectBox>
              </Sidebar>
              <Main>
                <TopActions>Deploy<EllipsisVertical size={17} strokeWidth={2.4} /></TopActions>
                <MainTitle>Pie Graph</MainTitle>
                <Figure><PieChart /></Figure>
                <Scrollbar />
              </Main>
            </StWindow>
          </WindowColumn>
          <Rail>
            <RailSearch><Search size={19} strokeWidth={1.6} /></RailSearch>
            <RailSlot><TagIcon /></RailSlot>
            <RailSlot><Toolbox /></RailSlot>
            <RailSlot><ChessIcon /></RailSlot>
            <RailSlot><M365 /></RailSlot>
            <RailSlot><Outlook /></RailSlot>
            <RailSlot><SendIcon /></RailSlot>
            <RailRule />
            <RailSlot><Plus size={18} strokeWidth={1.3} /></RailSlot>
            <Spacer />
            <RailSlot><Settings size={18} strokeWidth={1.4} /></RailSlot>
          </Rail>
        </Workspace>

        <Taskbar>
          <Slot $w={50}><WinLogo /></Slot>
          <SearchBox><SearchGlass />Type here to search<Spacer /><Salad /></SearchBox>
          <Slot $w={51}><TaskViewIcon /></Slot>
          <TaskSpacer $w={2.2} />
          {TASK_APPS.map((a, i) => (
            <TaskSlot key={i} $active={a.active}>
              <TaskIcon>{a.icon}</TaskIcon>
              <RunningBar $wide={a.active} $on={a.run} />
            </TaskSlot>
          ))}
          <Spacer />
          <Slot $w={30}><HelpBadge>?</HelpBadge></Slot>
          <Slot $w={28}><ChevronUp size={20} strokeWidth={1.2} /></Slot>
          <Slot $w={22}><BluetoothPill /></Slot>
          <Slot $w={27}><BatteryIcon /></Slot>
          <Slot $w={25}><Volume2 size={17} strokeWidth={1.2} color="#ddd" /></Slot>
          <Slot $w={26}><WifiIcon /></Slot>
          <Slot $w={36}><TrayText>ENG</TrayText></Slot>
          <Clock><span>06:38 PM</span><span>23-06-2024</span></Clock>
        </Taskbar>
      </Page>
    </>
  );
}
